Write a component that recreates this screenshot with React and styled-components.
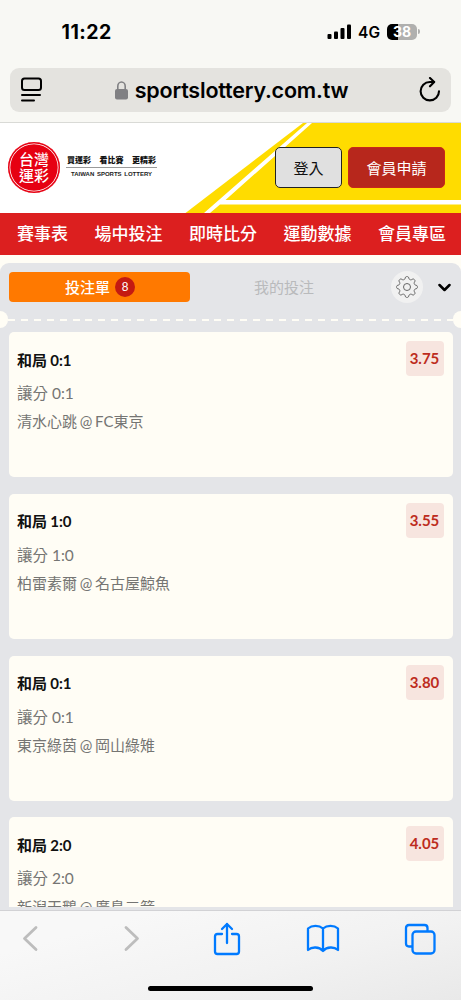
import React from "react";
import styled, { createGlobalStyle } from "styled-components";

const GlobalStyle = createGlobalStyle`
  * {
    box-sizing: border-box;
  }

  body {
    background: #fffdf5;
    font-family: Lato, "Noto Sans CJK TC", sans-serif;
    margin: 0;
  }
`;

const Screen = styled.div`
  display: flex;
  flex-direction: column;
  height: 1000px;
  overflow: hidden;
  width: 461px;
`;

const BrowserTop = styled.div`
  background: #f8f8f4;
  border-bottom: 1px solid #d9dad6;
  color: #000;
  flex: none;
  font-family: Inter, sans-serif;
  height: 123px;
`;

const StatusBar = styled.div`
  align-items: center;
  display: flex;
  height: 68px;
  justify-content: space-between;
  padding: 0 41px 5px 61.5px;
`;

const Clock = styled.span`
  font-size: 19.5px;
  font-weight: 700;
  letter-spacing: 0.5px;
`;

const StatusIcons = styled.div`
  align-items: center;
  display: flex;
`;

const Network = styled.span`
  font-size: 15.5px;
  font-weight: 600;
  margin: 1px 7px 0 6px;
`;

const Battery = styled.div`
  background: linear-gradient(90deg, #000 38%, #b0b0ae 38%);
  border-radius: 5px;
  color: #fff;
  font-size: 14px;
  font-weight: 700;
  height: 16px;
  line-height: 16px;
  text-align: center;
  width: 30px;
`;

const BatteryTip = styled.div`
  background: #b0b0ae;
  border-radius: 0 2px 2px 0;
  height: 5px;
  margin-left: 1px;
  width: 2px;
`;

const AddressBar = styled.div`
  align-items: center;
  background: #e4e3df;
  border-radius: 9px;
  display: flex;
  height: 44px;
  justify-content: space-between;
  margin: 0 10px;
  padding: 0 10px;
`;

const Address = styled.div`
  align-items: center;
  display: flex;
  font-size: 21.5px;
  font-weight: 600;
  gap: 7px;
  letter-spacing: -0.2px;
`;

const Header = styled.header`
  background: #fff;
  display: flex;
  flex: none;
  height: 90px;
  justify-content: space-between;
  padding: 19px 16px 0 8px;
  position: relative;
`;

const Stripes = styled.svg`
  inset: 0;
  position: absolute;
`;

const Logo = styled.div`
  display: flex;
  position: relative;
`;

const Seal = styled.div`
  align-items: center;
  background: #e60012;
  border-radius: 50%;
  box-shadow: inset 0 0 0 1.5px #e60012, inset 0 0 0 2.3px #fff;
  color: #fff;
  display: flex;
  flex-direction: column;
  font-size: 15px;
  font-weight: 500;
  height: 51px;
  justify-content: center;
  line-height: 15.5px;
  width: 52px;
`;

const Slogan = styled.div`
  display: flex;
  flex-direction: column;
  margin: 11px 0 0 6px;
  width: 91px;
`;

const SloganWords = styled.div`
  border-bottom: 1px solid #999;
  color: #111;
  display: flex;
  font-size: 8px;
  font-weight: 900;
  height: 15px;
  justify-content: space-between;
  line-height: 15px;
  padding: 0 1px;
`;

const SloganEnglish = styled.div`
  color: #222;
  font-family: "Liberation Sans", sans-serif;
  font-size: 6px;
  font-weight: 700;
  line-height: 12px;
  text-align: center;
  white-space: nowrap;
  word-spacing: 1px;
`;

const Buttons = styled.div`
  display: flex;
  gap: 6px;
  padding-top: 5px;
  position: relative;
`;

const Button = styled.button`
  background: ${(props) => (props.$primary ? "#b7271c" : "#e0e0e0")};
  border: 1px solid ${(props) => (props.$primary ? "#c72819" : "#222")};
  border-radius: 5px;
  color: ${(props) => (props.$primary ? "#fff" : "#111")};
  font-family: inherit;
  font-size: 15px;
  height: 41px;
  padding: 0 0 1px;
  width: ${(props) => (props.$primary ? 97 : 67)}px;
`;

const Nav = styled.nav`
  align-items: center;
  background: #dc1f1f;
  color: #fff;
  display: flex;
  flex: none;
  font-size: 17px;
  font-weight: 500;
  height: 42px;
  justify-content: space-between;
  margin-bottom: 8px;
  padding: 0 15px 3px 17px;
`;

const Slip = styled.main`
  background: #e4e5e8;
  border-radius: 9px 9px 0 0;
  display: flex;
  flex-direction: column;
  height: 647px;
  overflow: hidden;
`;

const Tabs = styled.div`
  align-items: center;
  display: flex;
  flex: none;
  height: 48px;
  padding: 0 9px;
`;

const ActiveTab = styled.div`
  align-items: center;
  background: #ff7900;
  border-radius: 4px;
  color: #fff;
  display: flex;
  font-size: 15px;
  font-weight: 500;
  gap: 5px;
  height: 30px;
  justify-content: center;
  padding-left: 1px;
  width: 181px;
`;

const TabName = styled.span`
  padding-bottom: 2px;
`;

const Count = styled.span`
  background: #c41a12;
  border-radius: 50%;
  font-family: "Liberation Sans", sans-serif;
  font-size: 12px;
  height: 20px;
  line-height: 20px;
  text-align: center;
  width: 20px;
`;

const Tab = styled.div`
  color: #b9babc;
  font-size: 15px;
  padding-bottom: 2px;
  text-align: center;
  width: 188px;
`;

const SettingsButton = styled.div`
  align-items: center;
  background: #f1f1f1;
  border-radius: 50%;
  display: flex;
  height: 32px;
  justify-content: center;
  margin-left: 13px;
  width: 32px;
`;

const Chevron = styled.svg`
  margin-left: 15px;
`;

const TearLine = styled.div`
  align-items: center;
  display: flex;
  flex: none;
  height: 17px;
`;

const Notch = styled.div`
  background: #fffdf5;
  border-radius: ${(props) => (props.$right ? "9px 0 0 9px" : "0 9px 9px 0")};
  height: 17px;
  width: 8px;
`;

const Dashes = styled.div`
  background: repeating-linear-gradient(
    90deg,
    #fffdf5 0 7px,
    transparent 7px 12.9px
  );
  flex: 1;
  height: 2px;
`;

const Bets = styled.div`
  display: flex;
  flex-direction: column;
  gap: 16.8px;
  height: 575px;
  margin: 4px 8.5px 0;
  overflow: hidden;
`;

const BetCard = styled.article`
  background: #fffdf5;
  border-radius: 5px;
  display: flex;
  flex: none;
  height: 145px;
  justify-content: space-between;
  padding: 9px 9px 0 8.5px;
`;

const Pick = styled.div`
  color: #111;
  font-size: 15px;
  font-weight: 700;
  letter-spacing: -0.1px;
  line-height: 20px;
  margin: 8.5px 0 9.5px;
`;

const BetLine = styled.div`
  color: #757573;
  font-size: ${(props) => props.$size || 15}px;
  line-height: 28.2px;
  white-space: pre;
  word-spacing: ${(props) => (props.$size ? 0 : -1.1)}px;
`;

const Odds = styled.div`
  background: #f7e5df;
  border-radius: 4px;
  color: #bd2c20;
  font-size: 15px;
  font-weight: 700;
  height: 35px;
  line-height: 35px;
  text-align: center;
  width: 38px;
`;

const Toolbar = styled.footer`
  background: linear-gradient(165deg, #f8f8f8 20%, #f2f2f2 60%, #e9e9e9);
  border-top: 1px solid #d2d2d5;
  display: flex;
  flex: none;
  flex-direction: column;
  height: 90px;
  justify-content: space-between;
  padding-bottom: 9px;
`;

const ToolIcons = styled.div`
  align-items: center;
  display: grid;
  grid-template-columns: 100.5px 90px 93.5px 98px auto;
  height: 55px;
  padding-left: 22px;
`;

const HomeIndicator = styled.div`
  align-self: center;
  background: #000;
  border-radius: 3px;
  height: 5px;
  width: 165px;
`;

const links = ["賽事表", "場中投注", "即時比分", "運動數據", "會員專區"];

const bets = [
  { score: "0:1", home: "清水心跳", away: "FC東京", odds: "3.75" },
  { score: "1:0", home: "柏雷素爾", away: "名古屋鯨魚", odds: "3.55" },
  { score: "0:1", home: "東京綠茵", away: "岡山綠雉", odds: "3.80" },
  { score: "2:0", home: "新潟天鵝", away: "廣島三箭", odds: "4.05" },
];

function Signal() {
  return (
    <svg width="25" height="16" viewBox="0 0 25 16">
      <rect x="0.5" y="10" width="4" height="5" rx="1" />
      <rect x="7" y="7.5" width="4" height="7.5" rx="1" />
      <rect x="13.5" y="4" width="4" height="11" rx="1" />
      <rect x="20" y="0.5" width="4" height="14.5" rx="1" />
    </svg>
  );
}

function PageIcon() {
  return (
    <svg width="24" height="26" viewBox="0 0 24 26" fill="none" stroke="#000" strokeWidth="2" strokeLinecap="round">
      <rect x="2" y="1.5" width="19" height="11.5" rx="2.5" />
      <path d="M2 18H20M2 23.5H14" />
    </svg>
  );
}

function Lock() {
  return (
    <svg width="13" height="19" viewBox="0 0 13 19">
      <rect x="0" y="8" width="13" height="10.5" rx="2" fill="#808083" />
      <path d="M2.8 9V5.2a3.7 4.2 0 0 1 7.4 0V9" fill="none" stroke="#808083" strokeWidth="1.6" />
    </svg>
  );
}

function Reload() {
  return (
    <svg width="22" height="26" viewBox="0 0 22 26" fill="none" stroke="#000" strokeWidth="2.1" strokeLinecap="round" strokeLinejoin="round">
      <path d="M20 14.2A9.2 9.2 0 1 1 10.8 5H15" />
      <path d="M11 1L15.2 5L11 9.3" />
    </svg>
  );
}

function Gear() {
  const points = [];
  for (let i = 0; i < 128; i++) {
    const angle = (i / 128) * Math.PI * 2;
    const r = 9.2 + 1.3 * Math.tanh(1.8 * Math.cos(angle * 8));
    points.push(
      `${(12 + r * Math.sin(angle)).toFixed(2)},${(12 - r * Math.cos(angle)).toFixed(2)}`
    );
  }
  return (
    <svg width="24" height="24" viewBox="0 0 24 24" fill="none" stroke="#666" strokeWidth="1" strokeLinejoin="round">
      <polygon points={points.join(" ")} />
      <circle cx="12" cy="12" r="3.5" />
    </svg>
  );
}

function App() {
  return (
    <>
      <GlobalStyle />
      <Screen>
        <BrowserTop>
          <StatusBar>
            <Clock>11:22</Clock>
            <StatusIcons>
              <Signal />
              <Network>4G</Network>
              <Battery>38</Battery>
              <BatteryTip />
            </StatusIcons>
          </StatusBar>
          <AddressBar>
            <PageIcon />
            <Address>
              <Lock />
              sportslottery.com.tw
            </Address>
            <Reload />
          </AddressBar>
        </BrowserTop>

        <Header>
          <Stripes width="461" height="90" viewBox="0 0 461 90">
            <path d="M303 0H461V90H185.5Z" fill="#ffdc00" />
            <path d="M307 0H312L225.5 77H461V81.5H220L210 90H204Z" fill="#fff" />
          </Stripes>
          <Logo>
            <Seal>
              <span>台灣</span>
              <span>運彩</span>
            </Seal>
            <Slogan>
              <SloganWords>
                <span>買運彩</span>
                <span>看比賽</span>
                <span>更精彩</span>
              </SloganWords>
              <SloganEnglish>TAIWAN SPORTS LOTTERY</SloganEnglish>
            </Slogan>
          </Logo>
          <Buttons>
            <Button>登入</Button>
            <Button $primary>會員申請</Button>
          </Buttons>
        </Header>

        <Nav>
          {links.map((link) => (
            <span key={link}>{link}</span>
          ))}
        </Nav>

        <Slip>
          <Tabs>
            <ActiveTab>
              <TabName>投注單</TabName>
              <Count>8</Count>
            </ActiveTab>
            <Tab>我的投注</Tab>
            <SettingsButton>
              <Gear />
            </SettingsButton>
            <Chevron width="13" height="10" viewBox="0 0 13 10" fill="none" stroke="#000" strokeWidth="2.5" strokeLinecap="round" strokeLinejoin="round">
              <path d="M1.5 3L6.5 8L11.5 3" />
            </Chevron>
          </Tabs>
          <TearLine>
            <Notch />
            <Dashes />
            <Notch $right />
          </TearLine>
          <Bets>
            {bets.map((bet) => (
              <BetCard key={bet.odds}>
                <div>
                  <Pick>和局 {bet.score}</Pick>
                  <BetLine $size={15.5}>讓分 {bet.score}</BetLine>
                  <BetLine>
                    {bet.home} @ {bet.away}
                  </BetLine>
                </div>
                <Odds>{bet.odds}</Odds>
              </BetCard>
            ))}
          </Bets>
        </Slip>

        <Toolbar>
          <ToolIcons>
            <svg width="17" height="27" viewBox="0 0 17 27" fill="none" stroke="#bdbdbd" strokeWidth="2.8" strokeLinecap="round" strokeLinejoin="round">
              <path d="M14 2.5L2.5 13.5L14 24.5" />
            </svg>
            <svg width="17" height="27" viewBox="0 0 17 27" fill="none" stroke="#bdbdbd" strokeWidth="2.8" strokeLinecap="round" strokeLinejoin="round">
              <path d="M3 2.5L14.5 13.5L3 24.5" />
            </svg>
            <svg width="28" height="34" viewBox="0 0 28 34" fill="none" stroke="#007aff" strokeWidth="2.3" strokeLinecap="round" strokeLinejoin="round">
              <path d="M9 12H4.5Q2 12 2 14.5V29.5Q2 32 4.5 32H23.5Q26 32 26 29.5V14.5Q26 12 23.5 12H19" />
              <path d="M14 21V2M9 7L14 2L19 7" />
            </svg>
            <svg width="34" height="29" viewBox="0 0 34 29" fill="none" stroke="#007aff" strokeWidth="2.3" strokeLinecap="round" strokeLinejoin="round">
              <path d="M17 4.5C13 1 6 1 2 4.5V26C6 22.5 13 22.5 17 27C21 22.5 28 22.5 32 26V4.5C28 1 21 1 17 4.5V27" />
            </svg>
            <svg width="32" height="32" viewBox="0 0 32 32" fill="none" stroke="#007aff" strokeWidth="2.3" strokeLinejoin="round">
              <path d="M8.5 23.5H5Q2 23.5 2 20.5V5Q2 2 5 2H20.5Q23.5 2 23.5 5V8.5" />
              <rect x="8.5" y="8.5" width="22" height="22" rx="3.5" />
            </svg>
          </ToolIcons>
          <HomeIndicator />
        </Toolbar>
      </Screen>
    </>
  );
}

export default App;
